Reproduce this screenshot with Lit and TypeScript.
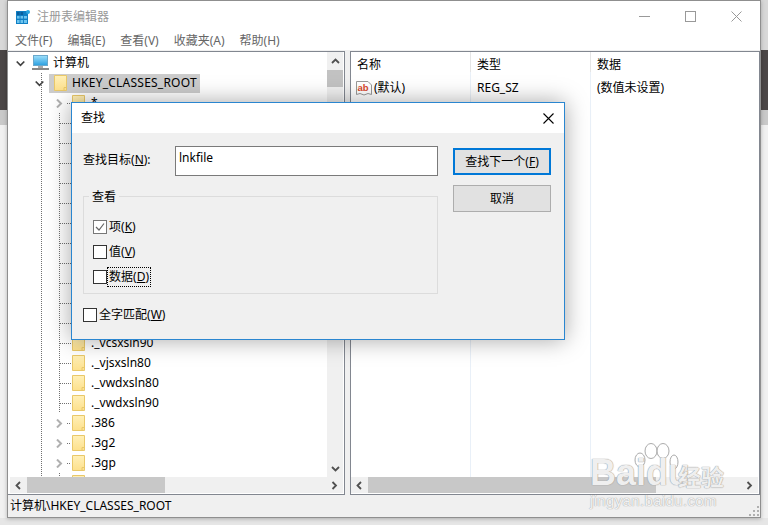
import { LitElement, html, css, svg } from "lit";
import { customElement } from "lit/decorators.js";

const chevDown = svg`<path d="M.7 2.5 L4.5 6.3 L8.3 2.5" fill="none" stroke="#404040" stroke-width="1.7"/>`;
const chevRight = svg`<path d="M1 .5 L5 4.5 L1 8.5" fill="none" stroke="#b0b0b0" stroke-width="2"/>`;

const folder = (cls = "") => html`<svg class="folder ${cls}" width="13" height="16" viewBox="0 0 13 16">
  <defs><linearGradient id="fg" x1="0" y1="0" x2="0" y2="1"><stop offset="0" stop-color="#fff0b8"/><stop offset="1" stop-color="#fde08c"/></linearGradient></defs>
  <path d="M.5.5H12.5V15.5H.5Z" fill="url(#fg)" stroke="#e9c869"/>
  <path d="M10 15V12.5H12.5" fill="none" stroke="#e9c869"/>
</svg>`;

const underl = (a: string, k: string, b = ")") => html`${a}(<u>${k}</u>${b}`;

const treeRows: { name: string; exp?: boolean }[] = [
  { name: "*", exp: true },
  { name: "._bsln80" }, { name: "._csproj" }, { name: "._dsw" }, { name: "._sln" },
  { name: "._sln100" }, { name: "._sln110" }, { name: "._sln120" }, { name: "._sln140" },
  { name: "._sln80" }, { name: "._sln90" }, { name: "._vbxsln80" },
  { name: "._vcsxsln90" }, { name: "._vjsxsln80" }, { name: "._vwdxsln80" }, { name: "._vwdxsln90" },
  { name: ".386", exp: true }, { name: ".3g2", exp: true }, { name: ".3gp", exp: true }, { name: "" },
];

@customElement("app-root")
export class AppRoot extends LitElement {
  static styles = css`
    :host {
      display: block; position: relative; width: 768px; height: 525px; overflow: hidden;
      font: 12px/16px "Noto Sans", "Noto Sans CJK SC", sans-serif; color: #000;
      background:
        linear-gradient(#d8d8d8 0 50px, #4b4646 50px 110px, #c9c9c9 110px 125px, #f1f1f1 125px 518px, #e6e6e6 518px);
    }
    .window {
      width: 752px; height: 516px; margin-left: 7px; border: 1px solid #8f8f8f; background: #fff;
      display: flex; flex-direction: column; box-shadow: 0 1px 4px rgba(0,0,0,.25);
    }
    .title { height: 29px; flex: none; display: flex; align-items: center; padding-left: 8px; color: #999; }
    .title .logo { margin-right: 7px; margin-top: 2px; }
    .title span { flex: 1; margin-top: 2px; }
    .winbtns { display: flex; gap: 35px; padding-right: 18px; margin-top: 1px; }
    .menu { height: 20px; box-sizing: border-box; padding-top: 2px; flex: none; display: flex; gap: 15px; padding-left: 7px; align-items: center; color: #666; }
    .spacer { height: 1px; flex: none; background: #f0f0f0; }
    .panes { flex: 1; min-height: 0; display: flex; gap: 5px; background: #f0f0f0; }
    .left {
      width: 335px; flex: none; background: #fff; border: 1px solid #828790; border-left: 0;
      display: flex; flex-direction: column; padding: 0 1px 1px 0;
    }
    .main { flex: 1; min-height: 0; display: flex; }
    .tree { flex: 1; min-width: 0; overflow: hidden; padding-top: 1px; }
    .row { height: 20px; display: flex; align-items: center; white-space: nowrap; background-repeat: no-repeat; }
    .exp { width: 9px; height: 9px; flex: none; display: block; }
    .r0 { padding-left: 8px; }
    .r0 .icon { margin: 0 4px 0 7px; }
    .r1 {
      padding-left: 27px;
      background-image: repeating-linear-gradient(to bottom, #707070 0 1px, transparent 1px 2px);
      background-size: 1px 20px; background-position: 33px 0;
    }
    .sel { display: flex; align-items: center; gap: 5px; margin-left: 5px; padding: 0 3px 0 5px; height: 19px; background: #ccc; letter-spacing: .23px; }
    .r2 {
      padding-left: 48px;
      background-image:
        repeating-linear-gradient(to bottom, #707070 0 1px, transparent 1px 2px),
        repeating-linear-gradient(to bottom, #707070 0 1px, transparent 1px 2px),
        repeating-linear-gradient(to right, #707070 0 1px, transparent 1px 2px);
      background-size: 1px 20px, 1px 20px, 11px 1px;
      background-position: 33px 0, 51px 0, 52px 10px;
    }
    .r2.hasexp {
      background-image:
        repeating-linear-gradient(to bottom, #707070 0 1px, transparent 1px 2px),
        repeating-linear-gradient(to right, #707070 0 1px, transparent 1px 2px);
      background-size: 1px 20px, 4px 1px;
      background-position: 33px 0, 59px 10px;
    }
    .r2 .folder { margin-left: 7px; margin-right: 6px; }
    .r2:not(.hasexp) .folder { margin-left: 16px; }
    .vbar { width: 16px; flex: none; background: #f0f0f0; display: flex; flex-direction: column; align-items: center; }
    .varrow { height: 18px; display: flex; align-items: center; justify-content: center; flex: none; }
    .vthumb { width: 16px; height: 17px; background: #c2c2c2; flex: none; }
    .vfill { flex: 1; }
    .hbar { height: 16px; flex: none; background: #f0f0f0; display: flex; align-items: center; }
    .left .hbar { margin-left: 2px; }
    .harrow { width: 17px; height: 16px; flex: none; display: flex; align-items: center; justify-content: center; }
    .hthumb { height: 16px; background: #c8c8c8; flex: none; }
    .left .hthumb { width: 138px; }
    .right .hthumb { width: 288px; }
    .hfill { flex: 1; }
    .right {
      flex: 1; min-width: 0; background: #fff; border: 1px solid #828790; display: flex; flex-direction: column; padding: 0 1px 1px 0;
    }
    .cols { flex: 1; min-height: 0; display: flex; }
    .col { width: 120px; box-sizing: border-box; flex: none; display: flex; flex-direction: column; border-right: 1px solid #e9f0f8; }
    .col:last-child { flex: 1; border-right: 0; }
    .head { height: 20px; box-sizing: border-box; padding: 6px 0 0 6px; display: flex; align-items: center; margin-bottom: 6px; margin-right: -1px; border-right: 1px solid #e5e5e5; }
    .col:last-child .head { border-right: 0; margin-right: 0; }
    .cell { height: 20px; padding-left: 6px; display: flex; align-items: center; }
    .cell svg { margin-left: -1px; margin-right: 2px; }
    .status { height: 22px; flex: none; background: #f0f0f0; display: flex; align-items: center; justify-content: space-between; padding: 0 1px 0 2px; }
    .grip { align-self: flex-end; margin-bottom: 1px; }

    .dialog {
      position: absolute; left: 71px; top: 102px; width: 492px; height: 236px;
      border: 1px solid #2a86d0; background: #f0f0f0; display: flex; flex-direction: column;
      box-shadow: 0 0 22px rgba(0,0,0,.35);
    }
    .dtitle { height: 30px; flex: none; background: #fff; display: flex; align-items: center; justify-content: space-between; padding: 0 10px 0 9px; }
    .dbody { flex: 1; display: flex; gap: 15px; padding: 13px 0 0 11px; }
    .dleft { width: 355px; flex: none; display: flex; flex-direction: column; }
    .target { display: flex; align-items: center; height: 30px; }
    .target label { width: 92px; flex: none; padding-bottom: 3px; }
    .input { flex: 1; height: 28px; border: 1px solid #7a7a7a; background: #fff; padding: 0 3px; line-height: 22px; }
    fieldset {
      margin: 12px 0 0; padding: 0 0 0 9px; box-sizing: content-box; height: 104px;
      border: 1px solid #dcdcdc; min-width: 0; display: flex; flex-direction: column;
    }
    legend { padding: 0 3px; margin-left: -4px; line-height: 18px; height: 16px; }
    .checks { display: flex; flex-direction: column; gap: 9px; padding-top: 15px; }
    .chk { display: flex; align-items: center; height: 16px; gap: 2px; }
    .box { width: 12px; height: 12px; border: 1px solid #333; background: #fff; flex: none; display: block; }
    .box.on { border-color: #777; }
    .focus { outline: 1px dotted #000; outline-offset: 0; padding: 0 1px; margin-left: -1px; height: 18px; display: flex; align-items: center; }
    .whole { margin-top: 13px; }
    .dbtns { width: 98px; flex: none; display: flex; flex-direction: column; gap: 10px; padding-top: 2px; }
    .btn { height: 27px; box-sizing: border-box; background: #e1e1e1; border: 1px solid #adadad; display: flex; align-items: center; justify-content: center; }
    .btn.def { border: 2px solid #0078d7; }

    .wm { position: absolute; left: 590px; top: 443px; width: 140px; height: 66px; color: rgba(255,255,255,.85); pointer-events: none; font-family: "Liberation Sans", sans-serif; }
    .wm svg { position: absolute; left: 44px; top: 0; }
    .wm .b { position: absolute; left: 0; top: 12px; font-size: 36px; line-height: 36px; font-weight: 700; letter-spacing: 0; text-shadow: 0 0 1px #999, 0 0 1px #999; }
    .wm .c { position: absolute; left: 88px; top: 20px; font: 700 23px/26px "Noto Sans CJK SC", sans-serif; text-shadow: 0 0 1px #999, 0 0 1px #999; }
    .wm .u { position: absolute; left: 0; top: 50px; font-size: 15px; line-height: 16px; letter-spacing: .35px; text-shadow: 0 0 1px #aaa, 0 0 1px #aaa; white-space: nowrap; }
  `;

  render() {
    const hbar = () => html`<div class="hbar">
      <div class="harrow"><svg width="9" height="9"><path d="M6 1 L2.5 4.5 L6 8" fill="none" stroke="#505050" stroke-width="1.8"/></svg></div>
      <div class="hthumb"></div><div class="hfill"></div>
      <div class="harrow"><svg width="9" height="9"><path d="M2.5 1 L6 4.5 L2.5 8" fill="none" stroke="#505050" stroke-width="1.8"/></svg></div>
    </div>`;
    return html`
      <div class="window">
        <div class="title">
          <svg class="logo" width="14" height="14" viewBox="0 0 14 14">
            <rect x="0" y="1" width="12" height="13" fill="#0f7fc4"/>
            <g fill="#6cc4ef">
              <rect x="1" y="6" width="2.6" height="2.6"/><rect x="4.5" y="6" width="2.6" height="2.6"/><rect x="8" y="6" width="3" height="2.6"/>
              <rect x="1" y="10" width="2.6" height="3"/><rect x="4.5" y="10" width="2.6" height="3"/><rect x="8" y="10" width="3" height="3"/>
            </g>
            <g fill="#0b5e9c"><rect x="1" y="2" width="2.6" height="3"/><rect x="4.5" y="2" width="2.6" height="3"/></g>
            <circle cx="12" cy="2" r="2" fill="#29a5e0"/>
          </svg>
          <span>注册表编辑器</span>
          <div class="winbtns">
            <svg width="11" height="11"><path d="M0 5.5H11" stroke="#999"/></svg>
            <svg width="11" height="11"><rect x=".5" y=".5" width="10" height="10" fill="none" stroke="#999"/></svg>
            <svg width="11" height="11"><path d="M.5.5 10.5 10.5M10.5.5 .5 10.5" stroke="#999"/></svg>
          </div>
        </div>
        <div class="menu">
          <span>文件(F)</span><span>编辑(E)</span><span>查看(V)</span><span>收藏夹(A)</span><span>帮助(H)</span>
        </div>
        <div class="spacer"></div>
        <div class="panes">
          <div class="left">
            <div class="main">
              <div class="tree">
                <div class="row r0">
                  <svg class="exp" viewBox="0 0 9 9">${chevDown}</svg>
                  <svg class="icon" width="17" height="16" viewBox="0 0 17 16">
                    <defs><linearGradient id="sc" x1="0" y1="0" x2="0" y2="1"><stop offset="0" stop-color="#9fe0fb"/><stop offset="1" stop-color="#2a9fe0"/></linearGradient></defs>
                    <rect x="1.5" y=".5" width="14" height="10" fill="url(#sc)" stroke="#6aa8cc"/>
                    <rect x="6" y="11" width="5" height="2" fill="#aaa"/>
                    <rect x="0" y="13" width="17" height="2" fill="#888"/>
                  </svg>
                  <span>计算机</span>
                </div>
                <div class="row r1">
                  <svg class="exp" viewBox="0 0 9 9">${chevDown}</svg>
                  <div class="sel">${folder()}<span>HKEY_CLASSES_ROOT</span></div>
                </div>
                ${treeRows.map(
                  (r) => html`<div class="row r2 ${r.exp ? "hasexp" : ""}">
                    ${r.exp ? html`<svg class="exp" viewBox="0 0 9 9">${chevRight}</svg>` : ""}
                    ${folder()}<span>${r.name}</span>
                  </div>`
                )}
              </div>
              <div class="vbar">
                <div class="varrow"><svg width="9" height="9"><path d="M1 6 L4.5 2.5 L8 6" fill="none" stroke="#505050" stroke-width="1.8"/></svg></div>
                <div class="vthumb"></div>
                <div class="vfill"></div>
                <div class="varrow"><svg width="9" height="9"><path d="M1 3 L4.5 6.5 L8 3" fill="none" stroke="#505050" stroke-width="1.8"/></svg></div>
              </div>
            </div>
            ${hbar()}
          </div>
          <div class="right">
            <div class="cols">
              <div class="col">
                <div class="head">名称</div>
                <div class="cell">
                  <svg width="16" height="16" viewBox="0 0 16 16">
                    <path d="M.5 1.5H12L15.5 5V14.5L12 13.5 8 15 4 13.5 .5 14.5Z" fill="#fff" stroke="#999"/>
                    <text x="1.5" y="10.5" font-size="9.5" font-weight="700" font-family="Liberation Sans" fill="#d9482b">ab</text>
                  </svg>
                  <span>(默认)</span>
                </div>
              </div>
              <div class="col">
                <div class="head">类型</div>
                <div class="cell">REG_SZ</div>
              </div>
              <div class="col">
                <div class="head">数据</div>
                <div class="cell">(数值未设置)</div>
              </div>
            </div>
            ${hbar()}
          </div>
        </div>
        <div class="status">
          <span>计算机\\HKEY_CLASSES_ROOT</span>
          <svg class="grip" width="10" height="10" viewBox="0 0 10 10" fill="#b0b0b0">
            <rect x="8" y="0" width="2" height="2"/><rect x="4" y="4" width="2" height="2"/><rect x="8" y="4" width="2" height="2"/>
            <rect x="0" y="8" width="2" height="2"/><rect x="4" y="8" width="2" height="2"/><rect x="8" y="8" width="2" height="2"/>
          </svg>
        </div>
      </div>

      <div class="dialog">
        <div class="dtitle">
          <span>查找</span>
          <svg width="11" height="11"><path d="M.5.5 10.5 10.5M10.5.5 .5 10.5" stroke="#000" stroke-width="1.1"/></svg>
        </div>
        <div class="dbody">
          <div class="dleft">
            <div class="target">
              <label>${underl("查找目标", "N", "):")}</label>
              <div class="input">lnkfile</div>
            </div>
            <fieldset>
              <legend>查看</legend>
              <div class="checks">
                <div class="chk">
                  <svg class="box on" viewBox="0 0 12 12"><path d="M2 6 L5 9 L10 2.5" fill="none" stroke="#666" stroke-width="1.2"/></svg>
                  <span>${underl("项", "K")}</span>
                </div>
                <div class="chk"><span class="box"></span><span>${underl("值", "V")}</span></div>
                <div class="chk"><span class="box"></span><span class="focus">${underl("数据", "D")}</span></div>
              </div>
            </fieldset>
            <div class="chk whole"><span class="box"></span><span>${underl("全字匹配", "W")}</span></div>
          </div>
          <div class="dbtns">
            <div class="btn def"><span>${underl("查找下一个", "F")}</span></div>
            <div class="btn">取消</div>
          </div>
        </div>
      </div>

      <div class="wm">
        <svg width="60" height="36" viewBox="0 0 60 36" fill="rgba(255,255,255,.6)" stroke="#aaa" stroke-width="1">
          <ellipse cx="6" cy="17" rx="5" ry="7"/>
          <ellipse cx="17" cy="8" rx="6" ry="7.5"/>
          <ellipse cx="29" cy="8" rx="6" ry="7.5"/>
          <ellipse cx="40" cy="19" rx="4" ry="7"/>
        </svg>
        <div class="b">Baidu</div>
        <div class="c">经验</div>
        <div class="u">jingyan.baidu.com</div>
      </div>
    `;
  }
}
